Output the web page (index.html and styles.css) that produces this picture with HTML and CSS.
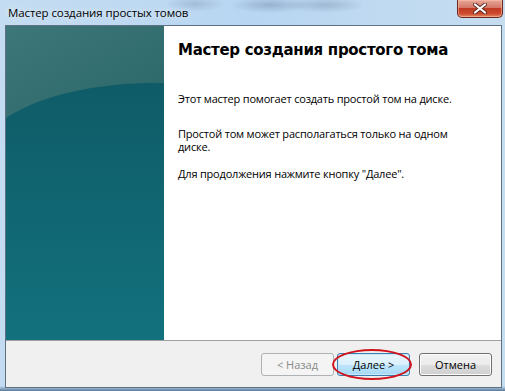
FILE: index.html
```html
<!DOCTYPE html>
<html lang="ru">
<head>
  <meta charset="UTF-8" />
  <title>Мастер создания простых томов</title>
  <link rel="stylesheet" href="styles.css">
</head>
<body>
  <!-- Window frame -->
  <div class="window">
    <div class="titlebar">
      <div class="title">Мастер создания простых томов</div>
      <div class="close" title="Закрыть">
        <svg width="16" height="11" viewBox="0 0 16 11">
          <path d="M3 1.5 L13 9.5 M13 1.5 L3 9.5" stroke="#5a2a24" stroke-width="4" stroke-linecap="round"/>
          <path d="M3 1.5 L13 9.5 M13 1.5 L3 9.5" stroke="#fff" stroke-width="2.2" stroke-linecap="round"/>
        </svg>
      </div>
    </div>

    <!-- Client area -->
    <div class="client">
      <div class="main">
        <div class="side">
          <svg width="158" height="314" viewBox="0 0 158 314" preserveAspectRatio="none">
            <defs>
              <linearGradient id="low" x1="0" y1="0" x2="0" y2="1">
                <stop offset="0" stop-color="#0e5763"/>
                <stop offset="1" stop-color="#12717d"/>
              </linearGradient>
              <linearGradient id="high" x1="0" y1="0" x2="1" y2="1">
                <stop offset="0" stop-color="#3e7779"/>
                <stop offset="1" stop-color="#2a6669"/>
              </linearGradient>
            </defs>
            <rect width="158" height="314" fill="url(#low)"/>
            <path d="M0 0 H158 V57 C100 56 40 66 0 92 Z" fill="url(#high)"/>
          </svg>
        </div>
        <div class="content">
          <h1 class="heading">Мастер создания простого тома</h1>
          <p class="intro">Этот мастер помогает создать простой том на диске.</p>
          <p>Простой том может располагаться только на одном диске.</p>
          <p>Для продолжения нажмите кнопку "Далее".</p>
        </div>
      </div>

      <div class="footer">
        <button class="btn" disabled>&lt; Назад</button>
        <div class="marked">
          <button class="btn default">Далее &gt;</button>
          <div class="ring"></div>
        </div>
        <button class="btn cancel">Отмена</button>
      </div>
    </div>
  </div>
</body>
</html>
```

FILE: styles.css
```css
/* Base */
* {
  box-sizing: border-box;
  margin: 0;
  padding: 0;
}
body {
  width: 505px;
  height: 391px;
  overflow: hidden;
  font-family: 'Open Sans', 'Noto Sans', sans-serif;
  font-size: 11px;
  color: #000;
  background:
    linear-gradient(to bottom, transparent 386px, #9ab6d0 388px, #5a7896 391px),
    radial-gradient(ellipse 40px 8px at 270px 5px, rgba(90, 110, 140, 0.35), transparent),
    radial-gradient(ellipse 40px 8px at 325px 5px, rgba(90, 110, 140, 0.3), transparent),
    radial-gradient(ellipse 30px 8px at 195px 4px, rgba(90, 110, 140, 0.25), transparent),
    linear-gradient(to right, #c4dcf1, #b8d6f2 50%, #c6ddf0);
}

/* Window frame */
.window {
  height: 391px;
  padding: 0 3px 3px 5px;
  display: flex;
  flex-direction: column;
}
.titlebar {
  height: 25px;
  display: flex;
  justify-content: space-between;
  align-items: flex-start;
}
.title {
  padding: 5px 0 0 3px;
  font-size: 11.5px;
  letter-spacing: -0.1px;
  color: #000;
  text-shadow: 0 0 6px rgba(255, 255, 255, 0.9);
}
.close {
  width: 46px;
  height: 18px;
  margin-right: -1px;
  display: flex;
  align-items: center;
  justify-content: center;
  border: 1px solid #6b2820;
  border-top: none;
  border-radius: 0 0 5px 5px;
  background: linear-gradient(to bottom, #e8a898 0%, #d47868 45%, #c23a24 50%, #cd4a30 80%, #e08a60 100%);
  box-shadow: inset 0 0 0 1px rgba(255, 200, 180, 0.5);
}

/* Client area */
.client {
  flex: 1;
  display: flex;
  flex-direction: column;
  border: 1px solid #5f7283;
  background: #fff;
}
.main {
  flex: 1;
  display: flex;
}
.side {
  width: 158px;
  flex: 0 0 158px;
  line-height: 0;
}
.content {
  flex: 1;
  padding: 14px 20px 0 14px;
}
.heading {
  font-family: 'DejaVu Sans', Verdana, sans-serif;
  font-weight: bold;
  font-size: 15px;
  line-height: 20px;
  letter-spacing: -0.3px;
  margin-bottom: 32px;
}
.content p {
  width: 295px;
  line-height: 13px;
  margin-bottom: 14px;
  letter-spacing: -0.2px;
}
.content .intro {
  margin-bottom: 22px;
}

/* Bottom button bar */
.footer {
  height: 47px;
  flex: 0 0 47px;
  border-top: 1px solid #a0a0a0;
  background: #f0f0f0;
  display: flex;
  align-items: center;
  justify-content: flex-end;
  padding: 0 9px 0 0;
}
.btn {
  width: 73px;
  height: 23px;
  font-family: 'Open Sans', 'Noto Sans', sans-serif;
  font-size: 11px;
  color: #000;
  border: 1px solid #707070;
  border-radius: 3px;
  background: linear-gradient(to bottom, #f2f2f2 0%, #ebebeb 50%, #dddddd 51%, #cfcfcf 100%);
  box-shadow: inset 0 0 0 1px #fcfcfc;
}
.btn[disabled] {
  color: #8a8a8a;
  border-color: #adb2b5;
  background: #f4f4f4;
  box-shadow: none;
}
.marked {
  position: relative;
  margin-left: 3px;
}
.default {
  border-color: #3c7fb1;
  background: linear-gradient(to bottom, #eaf6fd 0%, #d9f0fc 50%, #bee6fd 51%, #a7d9f5 100%);
  box-shadow: inset 0 0 0 1px #c8e8f8;
}
.cancel {
  margin-left: 9px;
}

/* Red annotation ring */
.ring {
  position: absolute;
  left: -5px;
  top: -4px;
  width: 80px;
  height: 31px;
  border: 2px solid #d0141e;
  border-radius: 50%;
  pointer-events: none;
}
```
